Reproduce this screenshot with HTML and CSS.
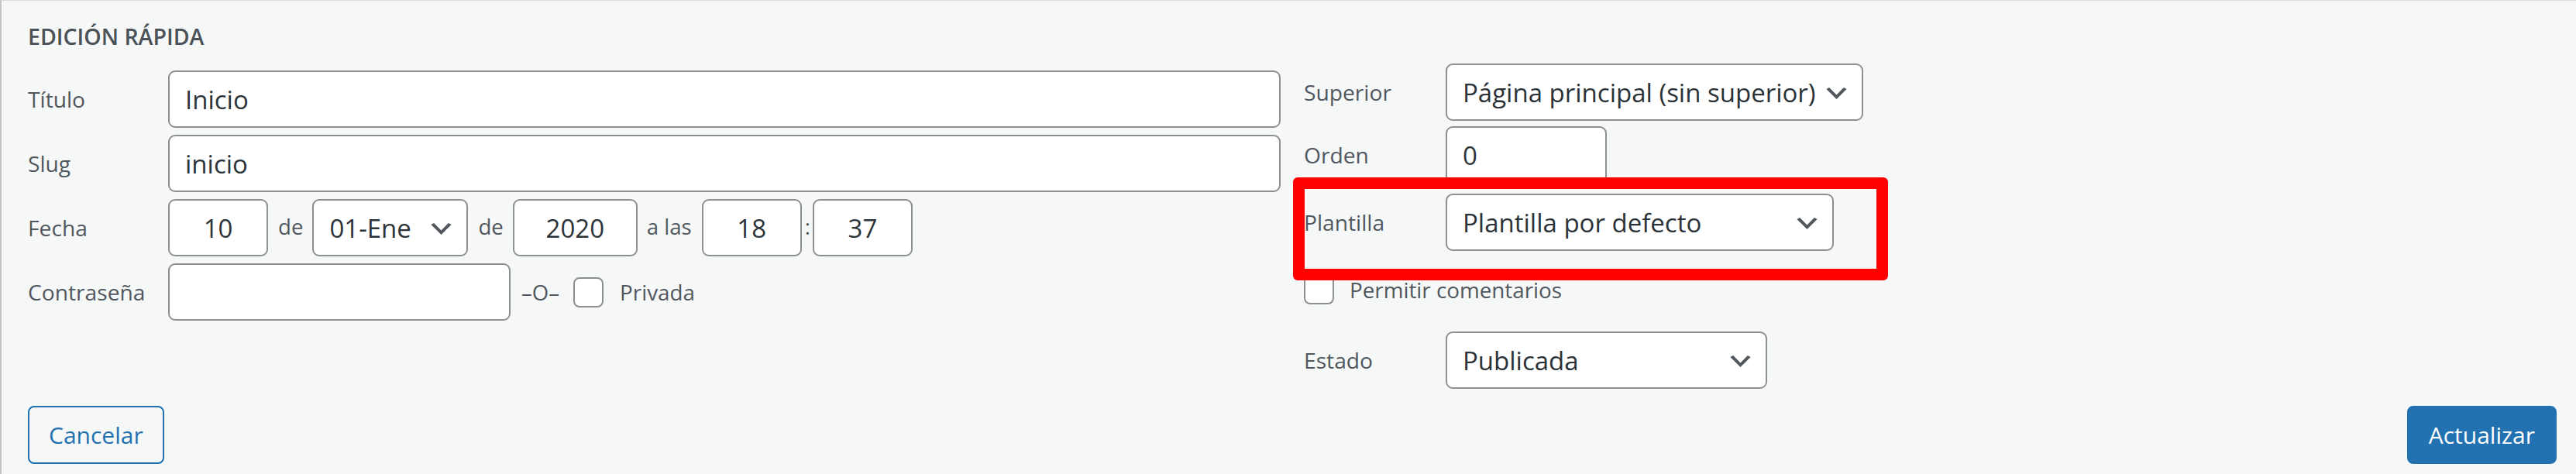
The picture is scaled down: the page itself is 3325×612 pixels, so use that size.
FILE: index.html
```html
<!DOCTYPE html>
<html lang="es">
<head>
<meta charset="utf-8">
<title>Edición rápida</title>
<link rel="stylesheet" href="styles.css">
</head>
<body>
<div class="panel">
  <div class="cols">
    <div class="col-left">
      <div class="legend">EDICIÓN RÁPIDA</div>
      <div class="rows">
        <div class="row">
          <span class="lbl">Título</span>
          <div class="field grow">Inicio</div>
        </div>
        <div class="row">
          <span class="lbl">Slug</span>
          <div class="field grow">inicio</div>
        </div>
        <div class="row">
          <span class="lbl">Fecha</span>
          <div class="field num w-day">10</div>
          <span class="sep">de</span>
          <div class="field select w-month"><span>01-Ene</span><svg class="chev" viewBox="3 6 14 8" width="27" height="15"><path d="M5 6l5 5 5-5 2 1-7 7-7-7 2-1z" fill="#50575e"/></svg></div>
          <span class="sep">de</span>
          <div class="field num w-year">2020</div>
          <span class="sep sep-las">a las</span>
          <div class="field num w-day">18</div>
          <span class="colon">:</span>
          <div class="field num w-day">37</div>
        </div>
        <div class="row">
          <span class="lbl">Contraseña</span>
          <div class="field w-pass"></div>
          <span class="or">–O–</span>
          <span class="check check-priv"></span>
          <span class="chk-text priv-text">Privada</span>
        </div>
      </div>
    </div>
    <div class="col-right">
      <div class="row">
        <span class="lbl lbl-r">Superior</span>
        <div class="field select w-parent"><span>Página principal (sin superior)</span><svg class="chev" viewBox="3 6 14 8" width="27" height="15"><path d="M5 6l5 5 5-5 2 1-7 7-7-7 2-1z" fill="#50575e"/></svg></div>
      </div>
      <div class="row row-orden">
        <span class="lbl lbl-r">Orden</span>
        <div class="field w-order">0</div>
      </div>
      <div class="row row-tpl">
        <span class="lbl lbl-r">Plantilla</span>
        <div class="field select w-tpl"><span>Plantilla por defecto</span><svg class="chev" viewBox="3 6 14 8" width="27" height="15"><path d="M5 6l5 5 5-5 2 1-7 7-7-7 2-1z" fill="#50575e"/></svg></div>
      </div>
      <div class="row-check">
        <span class="check"></span>
        <span class="chk-text">Permitir comentarios</span>
      </div>
      <div class="row row-estado">
        <span class="lbl lbl-r">Estado</span>
        <div class="field select w-status"><span>Publicada</span><svg class="chev" viewBox="3 6 14 8" width="27" height="15"><path d="M5 6l5 5 5-5 2 1-7 7-7-7 2-1z" fill="#50575e"/></svg></div>
      </div>
      <div class="highlight"></div>
    </div>
  </div>
  <div class="actions">
    <button class="btn btn-cancel">Cancelar</button>
    <button class="btn btn-primary">Actualizar</button>
  </div>
</div>
</body>
</html>
```

FILE: styles.css
```css
html, body {
  margin: 0;
  padding: 0;
  background: #f6f7f7;
}

.panel {
  box-sizing: border-box;
  height: 612px;
  border-top: 1px solid #dcdcde;
  border-left: 2px solid #c3c4c7;
  background: #f6f7f7;
  padding: 0 25px 13px 34px;
  display: flex;
  flex-direction: column;
  font-family: "Open Sans", "Noto Sans", sans-serif;
  color: #50575e;
}

.cols {
  display: flex;
  align-items: flex-start;
  gap: 30px;
}

.col-left {
  width: 1617px;
  flex: none;
}

.legend {
  margin: 26px 0 24px;
  line-height: 40px;
  font-size: 28.5px;
  font-weight: 600;
  color: #4a5157;
}

.rows {
  display: flex;
  flex-direction: column;
  gap: 9px;
}

.row {
  display: flex;
  align-items: center;
  height: 74px;
}

.lbl {
  width: 181px;
  flex: none;
  font-size: 28.2px;
}

.lbl-r {
  width: 183px;
}

.field {
  box-sizing: border-box;
  height: 74px;
  background: #fff;
  border: 2px solid #8c8f94;
  border-radius: 9px;
  padding: 0 20px;
  display: flex;
  align-items: center;
  font-size: 33px;
  color: #2c3338;
  white-space: nowrap;
  flex: none;
}

.grow {
  flex: 1;
}

.num {
  justify-content: center;
  padding: 0;
}

.w-day { width: 129px; }
.w-year { width: 161px; }
.w-month { width: 201px; }
.w-pass { width: 442px; }
.w-parent { width: 539px; }
.w-order { width: 208px; }
.w-tpl { width: 501px; }
.w-status { width: 415px; }

.select {
  justify-content: space-between;
  padding-right: 19px;
}

.chev {
  flex: none;
  margin-top: 3px;
}

.sep {
  font-size: 27.6px;
  margin: 0 12px 0 13px;
  padding-bottom: 4px;
}

.sep-las {
  margin: 0 13px 0 12px;
}

.colon {
  font-size: 27.6px;
  margin: 0 3px 0 4px;
  padding-bottom: 4px;
}

.or {
  font-size: 27.6px;
  margin-left: 14px;
}

.check {
  box-sizing: border-box;
  width: 39px;
  height: 39px;
  flex: none;
  background: #fff;
  border: 2px solid #8c8f94;
  border-radius: 8px;
}

.check-priv {
  margin-left: 18px;
}

.chk-text {
  font-size: 27.8px;
  margin-left: 20px;
}

.priv-text {
  margin-left: 21px;
}

.col-right {
  flex: 1;
  position: relative;
  margin-top: 81px;
}

.row-orden { margin-top: 7px; }
.row-tpl { margin-top: 13px; }

.row-check {
  display: flex;
  align-items: center;
  height: 39px;
  margin-top: 30px;
}

.row-estado { margin-top: 35px; }

.highlight {
  position: absolute;
  left: -14px;
  top: 147px;
  width: 768px;
  height: 133px;
  box-sizing: border-box;
  border: 15px solid #ff0000;
  border-radius: 6px;
}

.actions {
  margin-top: auto;
  display: flex;
  justify-content: space-between;
  align-items: center;
}

.btn {
  box-sizing: border-box;
  height: 75px;
  border-radius: 8px;
  border: 2px solid #2271b1;
  font-family: "Open Sans", "Noto Sans", sans-serif;
  font-size: 30px;
  padding: 0 25px;
  cursor: pointer;
}

.btn-cancel {
  background: #f6f7f7;
  color: #2271b1;
}

.btn-primary {
  background: #2271b1;
  color: #fff;
  padding: 0 26px;
}
```
